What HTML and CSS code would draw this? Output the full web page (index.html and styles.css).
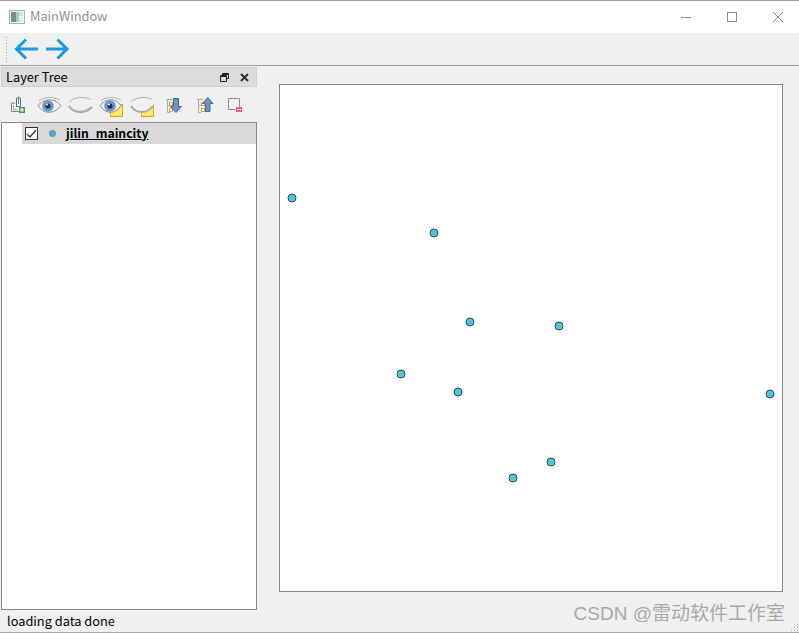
FILE: index.html
```html
<!DOCTYPE html>
<html lang="en">
<head>
<meta charset="utf-8">
<title>MainWindow</title>
<link rel="stylesheet" href="styles.css">
</head>
<body>
<div class="window">
  <header class="titlebar">
    <svg class="appicon" width="16" height="16" viewBox="0 0 16 16">
      <rect x="0.5" y="1.500" width="15" height="13" fill="#f3f5f5" stroke="#a9afb0"/>
      <rect x="2" y="3" width="5" height="10" fill="#6d8f94"/>
      <rect x="7" y="3" width="3" height="10" fill="#a9cdb9"/>
      <rect x="10" y="3" width="4" height="4" fill="#cfdde6"/>
      <rect x="10" y="8" width="4" height="5" fill="#e3ecec"/>
    </svg>
    <span class="title">MainWindow</span>
    <div class="winbtns">
      <svg class="winbtn" width="12" height="12" viewBox="0 0 12 12"><path d="M1 6.500H11" stroke="#8c8c8c"/></svg>
      <svg class="winbtn" width="12" height="12" viewBox="0 0 12 12"><rect x="1.500" y="1.500" width="9" height="9" fill="none" stroke="#8c8c8c"/></svg>
      <svg class="winbtn" width="12" height="12" viewBox="0 0 12 12"><path d="M1 1L11 11M11 1L1 11" stroke="#8c8c8c"/></svg>
    </div>
  </header>
  <div class="toolbar">
    <span class="grip"></span>
    <svg class="navicon" width="26" height="24" viewBox="0 0 26 24"><path d="M24 12H3M12 2.500L2.500 12L12 21.500" fill="none" stroke="#1a9ae0" stroke-width="3"/></svg>
    <svg class="navicon" width="26" height="24" viewBox="0 0 26 24"><path d="M1 12H21M12.500 2.500L22 12L12.500 21.500" fill="none" stroke="#1a9ae0" stroke-width="3"/></svg>
  </div>
  <main class="central">
    <aside class="dock">
      <div class="dockhead">
        <span class="docktitle">Layer Tree</span>
        <svg class="dockbtn" width="9" height="9" viewBox="0 0 9 9"><path d="M2.500 2.500V0.500H8.500V5.500H6.500M0.500 2.500H6.500V8.500H0.500Z" fill="none" stroke="#222"/><path d="M1 3.500H6M3 1.500H8" stroke="#222"/></svg>
        <svg class="dockbtn" width="9" height="9" viewBox="0 0 9 9"><path d="M1 1L8 8M8 1L1 8" stroke="#333" stroke-width="2"/></svg>
      </div>
      <div class="docktools">
        <svg class="tool" width="31" height="27" viewBox="0 0 31 27">
          <path d="M12 12H8.500V20.500H17.500V17" fill="none" stroke="#7f7f7f"/>
          <path d="M10.500 14V18.500H14" fill="none" stroke="#a8a8a8"/>
          <path d="M13.500 7V15.500H17.500V7Z" fill="none" stroke="#4d6f9a"/>
          <path d="M15.500 5.500V13" stroke="#7f7f7f"/>
          <rect x="16.500" y="16.500" width="5" height="5" fill="#6fbc76" stroke="#4f9a57"/>
          <path d="M19 17.500V20.500M17.500 19H20.500" stroke="#fff"/>
        </svg>
        <svg class="tool" width="31" height="27" viewBox="0 0 31 27">
          <path d="M4 14.500C9 8 20 6 27 14.500C20 24 9 23 4 14.500Z" fill="#eef2f6" stroke="#8c8c8c"/>
          <path d="M5 9.500C11 5.500 20 5.500 26 9" fill="none" stroke="#b0b0b0"/>
          <circle cx="14" cy="15" r="5.800" fill="#6e97c9"/>
          <circle cx="14" cy="15" r="2.600" fill="#22324c"/>
          <circle cx="13" cy="13.500" r="1" fill="#fff"/>
        </svg>
        <svg class="tool" width="31" height="27" viewBox="0 0 31 27">
          <path d="M4 11C9 6 19 5 26 8.500" fill="none" stroke="#b0b0b0"/>
          <path d="M4 15C9 23 20 23 27 16" fill="none" stroke="#a6a6a6" stroke-width="2"/>
          <path d="M5 15.500C10 21 19 21 26 15.500" fill="none" stroke="#cfcfcf"/>
        </svg>
        <svg class="tool" width="31" height="27" viewBox="0 0 31 27">
          <rect x="14.500" y="13.500" width="12" height="12" fill="#ffe95f" stroke="#c8a82e"/>
          <path d="M4 14.500C9 8 19 6 25 14.500C19 24 9 23 4 14.500Z" fill="#eef2f6" stroke="#8c8c8c"/>
          <path d="M5 9.500C11 5.500 19 5.500 25 9" fill="none" stroke="#b0b0b0"/>
          <circle cx="14" cy="15" r="5.800" fill="#6e97c9"/>
          <circle cx="14" cy="15" r="2.600" fill="#22324c"/>
          <circle cx="13" cy="13.500" r="1" fill="#fff"/>
        </svg>
        <svg class="tool" width="31" height="27" viewBox="0 0 31 27">
          <rect x="14.500" y="13.500" width="12" height="12" fill="#ffe95f" stroke="#c8a82e"/>
          <path d="M4 15C9 23 20 23 27 13V10H4Z" fill="#f0f0f0"/>
          <path d="M4 11C9 6 19 5 25 8.500" fill="none" stroke="#b0b0b0"/>
          <path d="M4 15C9 23 20 23 26 15" fill="none" stroke="#a6a6a6" stroke-width="2"/>
        </svg>
        <svg class="tool" width="31" height="27" viewBox="0 0 31 27">
          <path d="M8 8.500H15M9.500 8.500V21.500H12M9.500 14.500H12" fill="none" stroke="#ababab"/>
          <rect x="11.500" y="11.500" width="3" height="3" fill="#fff" stroke="#f0a030"/>
          <rect x="11.500" y="17.500" width="3" height="3" fill="#fff" stroke="#f0a030"/>
          <path d="M15.500 7.500H20.500V15.500H23.500L18 21.500L12.500 15.500H15.500Z" fill="#6a97c2" stroke="#3d6a96"/>
        </svg>
        <svg class="tool" width="31" height="27" viewBox="0 0 31 27">
          <path d="M8 8.500H14M9.500 8.500V21.500H12M9.500 14.500H12" fill="none" stroke="#ababab"/>
          <rect x="12.500" y="11.500" width="3" height="3" fill="#fff" stroke="#f0a030"/>
          <rect x="12.500" y="17.500" width="3" height="3" fill="#fff" stroke="#f0a030"/>
          <path d="M16.500 20.500H21V12.500H24L18.700 6.500L13.500 12.500H16.500Z" fill="#6a97c2" stroke="#3d6a96"/>
        </svg>
        <svg class="tool" width="31" height="27" viewBox="0 0 31 27">
          <path d="M16 18.500H8.500V7.500H19.500V16" fill="none" stroke="#8f8f8f"/>
          <rect x="16" y="16" width="6" height="5" fill="#f2606c"/>
          <path d="M17 18.500H21" stroke="#fff"/>
        </svg>
      </div>
      <div class="tree">
        <div class="treerow">
          <span class="check"><svg width="13" height="13" viewBox="0 0 13 13"><path d="M2 7L5 10L11 3" fill="none" stroke="#333" stroke-width="1.200"/></svg></span>
          <span class="legend"></span>
          <span class="layername">jilin_maincity</span>
        </div>
      </div>
    </aside>
    <section class="mapwrap">
      <div class="map">
        <span class="pt" style="left:8px;top:109px"></span>
        <span class="pt" style="left:150px;top:144px"></span>
        <span class="pt" style="left:186px;top:233px"></span>
        <span class="pt" style="left:275px;top:237px"></span>
        <span class="pt" style="left:117px;top:285px"></span>
        <span class="pt" style="left:174px;top:303px"></span>
        <span class="pt" style="left:486px;top:305px"></span>
        <span class="pt" style="left:267px;top:373px"></span>
        <span class="pt" style="left:229px;top:389px"></span>
      </div>
    </section>
  </main>
  <footer class="statusbar">
    <span class="status">loading data done</span>
    <span class="watermark">CSDN @雷动软件工作室</span>
    <svg class="sizegrip" width="9" height="9" viewBox="0 0 9 9"><path d="M7 1h1v1H7zM4 4h1v1H4zM7 4h1v1H7zM1 7h1v1H1zM4 7h1v1H4zM7 7h1v1H7z" fill="#aaa"/></svg>
  </footer>
</div>
</body>
</html>
```
FILE: styles.css
```css
html, body {
  margin: 0;
  padding: 0;
  height: 100%;
  overflow: hidden;
  background: #f0f0f0;
}
.window {
  width: 799px;
  height: 633px;
  display: flex;
  flex-direction: column;
  box-sizing: border-box;
  border-top: 1px solid #a3a3a3;
  border-bottom: 1px solid #a8a8a8;
  background: #f0f0f0;
  font-family: "Noto Sans CJK SC", "Liberation Sans", sans-serif;
  color: #000;
  font-size: 12.8px;
}
.titlebar {
  height: 32px;
  flex: none;
  display: flex;
  align-items: center;
  background: #fff;
  padding-left: 9px;
  box-sizing: border-box;
}
.appicon { flex: none; margin-bottom: 1px; }
.title {
  margin-left: 5px;
  margin-bottom: 3px;
  color: #8f8f8f;
  line-height: 16px;
}
.winbtns {
  margin-left: auto;
  display: flex;
  gap: 34px;
  padding-right: 15px;
}
.winbtn { display: block; }
.toolbar {
  height: 33px;
  flex: none;
  display: flex;
  align-items: center;
  box-sizing: border-box;
  border-bottom: 1px solid #a0a0a0;
  padding-left: 5px;
  background: #f0f0f0;
}
.grip {
  width: 3px;
  height: 26px;
  background-image: radial-gradient(circle, #9a9a9a 0.8px, transparent 1px);
  background-size: 3px 3px;
  margin-right: 6px;
}
.navicon { display: block; margin-right: 5px; }
.central {
  flex: 1;
  min-height: 0;
  display: flex;
}
.dock {
  width: 256px;
  flex: none;
  margin-left: 1px;
  display: flex;
  flex-direction: column;
}
.dockhead {
  height: 20px;
  margin-top: 1px;
  flex: none;
  display: flex;
  align-items: center;
  background: #dcdcdc;
  border: 1px solid #cfcfcf;
  box-sizing: border-box;
  padding: 0 7px 0 4px;
}
.docktitle {
  line-height: 16px;
  color: #000;
  margin-right: auto;
}
.dockbtn { display: block; margin-left: 11px; }
.docktools {
  height: 35px;
  flex: none;
  display: flex;
  align-items: center;
  padding-left: 2px;
  box-sizing: border-box;
}
.tool { display: block; flex: none; }
.tree {
  flex: 1;
  min-height: 0;
  box-sizing: border-box;
  background: #fff;
  border: 1px solid #828790;
  padding-left: 20px;
}
.treerow {
  height: 21px;
  background: #d9d9d9;
  display: flex;
  align-items: center;
  padding-left: 3px;
}
.check {
  width: 13px;
  height: 13px;
  box-sizing: border-box;
  border: 1px solid #333;
  background: #fff;
  display: flex;
  align-items: center;
  justify-content: center;
  flex: none;
}
.check svg { display: block; flex: none; }
.legend {
  width: 7px;
  height: 7px;
  border-radius: 50%;
  background: #3fb4dc;
  border: 1px solid #5a8a9c;
  box-sizing: border-box;
  margin-left: 11px;
  flex: none;
}
.layername {
  margin-left: 10px;
  margin-bottom: 2px;
  font-size: 12.2px;
  font-weight: 700;
  text-decoration: underline;
  line-height: 16px;
}
.mapwrap {
  flex: 1;
  padding: 18px 16px 18px 22px;
  display: flex;
  min-width: 0;
}
.map {
  position: relative;
  flex: 1;
  background: #fff;
  border: 1px solid #828790;
}
.pt {
  position: absolute;
  width: 9px;
  height: 9px;
  transform: translate(-0.5px, -0.5px);
  box-sizing: border-box;
  border: 1px solid #37474d;
  border-radius: 50%;
  background: #4cc6de;
}
.statusbar {
  height: 22px;
  flex: none;
  display: flex;
  align-items: center;
  position: relative;
  padding-left: 7px;
}
.status {
  line-height: 16px;
}
.watermark {
  position: absolute;
  right: 14px;
  top: -8px;
  font-size: 19px;
  line-height: 24px;
  color: #a9a9a9;
  font-family: "Liberation Sans", "Noto Sans CJK SC", sans-serif;
}
.sizegrip {
  position: absolute;
  right: 0;
  bottom: 0;
}
```
